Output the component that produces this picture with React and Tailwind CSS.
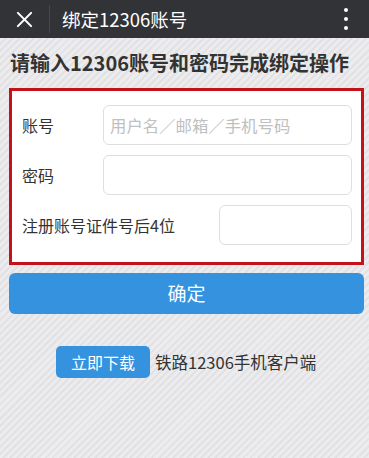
const font = { fontFamily: '"Noto Sans CJK SC", "Noto Sans", sans-serif' };

export default function App() {
  return (
    <div
      className="w-[369px] h-[458px] overflow-hidden bg-[#e7e7e9] bg-[repeating-linear-gradient(135deg,#e2e2e4_0px,#e2e2e4_2px,#ececee_2px,#ececee_5px)]"
      style={font}
    >
      {/* Top bar */}
      <div className="h-[38px] bg-[#323336] flex items-center">
        <div className="w-[49px] flex items-center justify-center">
          <svg width="17" height="17" viewBox="0 0 18 18">
            <path d="M2 2 L16 16 M16 2 L2 16" stroke="#fff" strokeWidth="2.2" strokeLinecap="round" />
          </svg>
        </div>
        <div className="w-px h-[28px] bg-[#46474a]" />
        <div className="ml-[12px] text-white text-[18.5px] leading-none flex-1">绑定12306账号</div>
        <div className="w-[46px] flex flex-col items-center gap-[5px]">
          <span className="w-[4px] h-[4px] rounded-full bg-white" />
          <span className="w-[4px] h-[4px] rounded-full bg-white" />
          <span className="w-[4px] h-[4px] rounded-full bg-white" />
        </div>
      </div>

      <div className="pl-[9px] pr-[5px]">
        <h1 className="pt-[13px] pb-[13px] pl-[1px] text-[20px] font-bold text-[#333] leading-[24px] whitespace-nowrap">
          请输入12306账号和密码完成绑定操作
        </h1>

        {/* Form box */}
        <div className="border-[3px] border-[#c4121b] bg-white pl-[10px] pr-[9px] pt-[14px] pb-[17px] flex flex-col gap-[10px]">
          <div className="flex items-center">
            <span className="w-[81px] text-[16px] text-[#333]">账号</span>
            <div className="flex-1 h-[40px] border border-[#dedede] rounded-[6px] flex items-center px-[6px] text-[16.4px] text-[#c0c0c0]">
              用户名／邮箱／手机号码
            </div>
          </div>
          <div className="flex items-center">
            <span className="w-[81px] text-[16px] text-[#333]">密码</span>
            <div className="flex-1 h-[40px] border border-[#dedede] rounded-[6px]" />
          </div>
          <div className="flex items-center justify-between">
            <span className="text-[16px] text-[#333]">注册账号证件号后4位</span>
            <div className="w-[133px] h-[40px] border border-[#dedede] rounded-[6px]" />
          </div>
        </div>

        {/* Confirm */}
        <button className="mt-[8px] w-full h-[41px] rounded-[6px] bg-[#3492df] text-white text-[19px] flex items-center justify-center">
          确定
        </button>

        <div className="mt-[32px] flex items-center pl-[47px]">
          <span className="h-[32px] w-[94px] rounded-[5px] bg-[#3492df] text-white text-[16px] flex items-center justify-center">
            立即下载
          </span>
          <span className="ml-[5px] text-[16.5px] text-[#333]">铁路12306手机客户端</span>
        </div>
      </div>
    </div>
  );
}
